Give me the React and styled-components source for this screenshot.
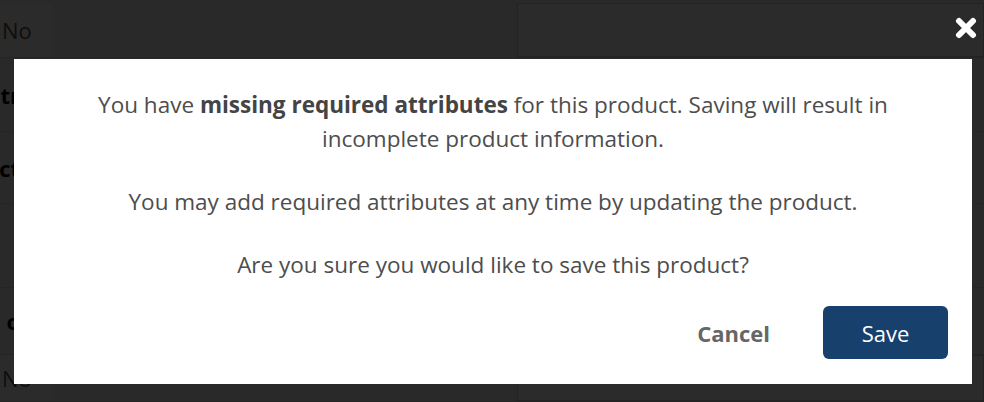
import React from 'react'
import styled, { createGlobalStyle } from 'styled-components'

const GlobalStyle = createGlobalStyle`
  html, body {
    margin: 0;
    padding: 0;
    background: #f7f7f7;
    font-family: "Open Sans", "Liberation Sans", sans-serif;
    overflow: hidden;
  }
`

// page underneath the modal (dimmed by the overlay)
const Page = styled.div`
  width: 984px;
  height: 402px;
  padding-top: 3px;
  box-sizing: border-box;
  background: #f2f2f2;
`

const Row = styled.div`
  display: grid;
  grid-template-columns: 52px 465px 1fr;
  height: ${props => props.h}px;
  border-bottom: 1px solid #d8d8d8;
  box-sizing: border-box;
`

const Cell = styled.div`
  display: flex;
  align-items: center;
  justify-content: ${props => (props.end ? 'flex-end' : 'flex-start')};
  padding: ${props => (props.end ? '0 32px 0 0' : '0 0 0 2px')};
  font-size: 22px;
  color: ${props => (props.bold ? '#000' : '#555')};
  font-weight: ${props => (props.bold ? 700 : 400)};
  background: ${props => (props.light ? '#ffffff' : 'transparent')};
  overflow: hidden;
  white-space: nowrap;
`

const Box = styled.div`
  border: 1px solid #cfcfcf;
  background: ${props => (props.light ? '#ffffff' : 'transparent')};
`

const Overlay = styled.div`
  position: fixed;
  inset: 0;
  background: rgba(0, 0, 0, 0.83);
  display: flex;
  align-items: flex-start;
  padding: 59px 12px 0 14px;
`

const Close = styled.button`
  position: absolute;
  top: 17px;
  right: 7px;
  width: 22px;
  height: 22px;
  padding: 0;
  border: 0;
  background: transparent;
  cursor: pointer;
  display: flex;
  align-items: center;
  justify-content: center;
`

const Modal = styled.div`
  flex: 1;
  height: 325px;
  background: #fff;
  box-sizing: border-box;
  padding: 29px 70px 0;
  display: flex;
  flex-direction: column;
`

const Message = styled.p`
  margin: 0 0 29px;
  text-align: center;
  font-size: 22.5px;
  line-height: 34px;
  color: #4d4d4d;

  b {
    color: #444;
    font-weight: 700;
  }
`

const Actions = styled.div`
  display: flex;
  justify-content: flex-end;
  align-items: center;
  gap: 53px;
  margin-top: -5px;
  margin-right: -46px;
`

const CancelButton = styled.button`
  border: 0;
  background: transparent;
  font-family: inherit;
  font-size: 22px;
  font-weight: 700;
  color: #666;
  padding: 0;
  cursor: pointer;
`

const SaveButton = styled.button`
  width: 125px;
  height: 53px;
  border: 0;
  border-radius: 6px;
  background: #17406d;
  color: #fff;
  font-family: inherit;
  font-size: 22px;
  cursor: pointer;
`

export default function App() {
  return (
    <>
      <GlobalStyle />
      <Page>
        <Row h={55}>
          <Cell light>No</Cell>
          <Cell />
          <Box light />
        </Row>
        <Row h={74}>
          <Cell bold end>tr</Cell>
          <Cell />
          <Cell />
        </Row>
        <Row h={72}>
          <Cell bold end>ct</Cell>
          <Cell />
          <Cell />
        </Row>
        <Row h={84}>
          <Cell />
          <Cell />
          <Cell />
        </Row>
        <Row h={67}>
          <Cell bold end>o</Cell>
          <Cell />
          <Cell bold end>r</Cell>
        </Row>
        <Row h={47}>
          <Cell light>No</Cell>
          <Cell />
          <Box light />
        </Row>
      </Page>
      <Overlay>
        <Close aria-label="Close">
          <svg width="22" height="22" viewBox="0 0 22 22">
            <path d="M4 4 L18 18 M18 4 L4 18" stroke="#fff" strokeWidth="6" strokeLinecap="round" />
          </svg>
        </Close>
        <Modal>
          <Message>
            You have <b>missing required attributes</b> for this product. Saving will result in
            incomplete product information.
          </Message>
          <Message>You may add required attributes at any time by updating the product.</Message>
          <Message>Are you sure you would like to save this product?</Message>
          <Actions>
            <CancelButton>Cancel</CancelButton>
            <SaveButton>Save</SaveButton>
          </Actions>
        </Modal>
      </Overlay>
    </>
  )
}
